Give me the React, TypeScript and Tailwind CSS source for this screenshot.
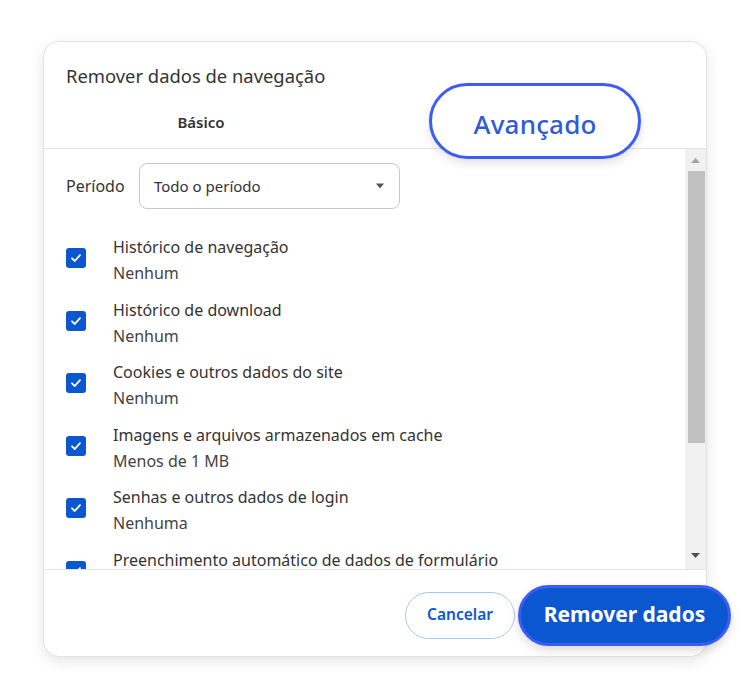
import React from "react";

const items: [string, string][] = [
  ["Histórico de navegação", "Nenhum"],
  ["Histórico de download", "Nenhum"],
  ["Cookies e outros dados do site", "Nenhum"],
  ["Imagens e arquivos armazenados em cache", "Menos de 1 MB"],
  ["Senhas e outros dados de login", "Nenhuma"],
  ["Preenchimento automático de dados de formulário", ""],
];

function Check() {
  return (
    <div className="w-[20px] h-[20px] rounded-[3px] bg-[#0b57d0] flex items-center justify-center shrink-0">
      <svg width="12" height="12" viewBox="0 0 12 12" fill="none">
        <path d="M2 6.3 L4.8 9 L10 3.2" stroke="white" strokeWidth="1.8" strokeLinecap="round" strokeLinejoin="round" />
      </svg>
    </div>
  );
}

export default function App() {
  return (
    <div className="w-[750px] h-[699px] bg-white pt-[41px] pl-[43px]" style={{ fontFamily: '"Noto Sans", "Open Sans", sans-serif' }}>
      <div className="relative w-[664px] h-[616px] rounded-[16px] border border-[#e2e2e2] bg-white shadow-[0_4px_14px_rgba(0,0,0,0.10)] flex flex-col">
        {/* header */}
        <div className="h-[107px] flex flex-col border-b border-[#e4e4e4] rounded-t-[16px]">
          <div className="pl-[22px] pt-[21px] text-[18.4px] leading-[26px] text-[#333]">Remover dados de navegação</div>
          <div className="flex flex-1">
            <div className="w-[314px] flex items-center justify-center text-[15px] font-semibold text-[#333] pt-[8px]">Básico</div>
            <div className="flex-1" />
          </div>
        </div>
        {/* Avançado pill overlay */}
        <div className="absolute left-[385px] top-[41px] w-[212px] h-[76px] rounded-full border-[3px] border-[#3d5cf5] bg-white shadow-[0_4px_10px_rgba(0,0,0,0.12)] flex items-center justify-center">
          <span className="text-[26px] font-medium text-[#2f5bd9] tracking-[0.2px] pt-[6px]">Avançado</span>
        </div>
        {/* scroll body */}
        <div className="flex h-[421px] border-b border-[#e4e4e4]">
          <div className="flex-1 overflow-hidden pl-[22px]">
            <div className="flex items-center h-[46px] mt-[14px]">
              <span className="text-[16px] text-[#333] w-[73px]">Período</span>
              <div className="w-[261px] h-[46px] rounded-[8px] border border-[#c8c8c8] flex items-center justify-between pl-[14px] pr-[14px]">
                <span className="text-[15px] text-[#333]">Todo o período</span>
                <svg width="10" height="6" viewBox="0 0 10 6"><path d="M1 0.5 L9 0.5 L5 5.5 Z" fill="#555" /></svg>
              </div>
            </div>
            <div className="mt-[25px] flex flex-col">
              {items.map(([a, b], i) => (
                <div key={i} className="h-[62.6px] shrink-0 flex items-start">
                  <div className="mt-[14px]"><Check /></div>
                  <div className="pl-[27px] flex flex-col">
                    <span className="text-[16px] leading-[26px] text-[#333] whitespace-nowrap">{a}</span>
                    <span className="text-[16px] leading-[26px] text-[#444]">{b}</span>
                  </div>
                </div>
              ))}
            </div>
          </div>
          {/* scrollbar */}
          <div className="w-[21px] bg-[#f1f1f1] flex flex-col items-center">
            <div className="h-[22px] flex items-center justify-center">
              <svg width="9" height="5" viewBox="0 0 9 5"><path d="M0 5 L4.5 0 L9 5 Z" fill="#a3a3a3" /></svg>
            </div>
            <div className="w-[17px] h-[272px] bg-[#c1c1c1] ml-[2px]" />
            <div className="flex-1" />
            <div className="h-[28px] flex items-center justify-center">
              <svg width="9" height="5" viewBox="0 0 9 5"><path d="M0 0 L9 0 L4.5 5 Z" fill="#505050" /></svg>
            </div>
          </div>
        </div>
        {/* footer */}
        <div className="flex-1 flex items-center justify-end pt-[4px]">
          <button className="w-[110px] h-[47px] rounded-full border border-[#a8c7fa] bg-white text-[15.5px] font-semibold text-[#0b57d0] mr-[3px]">Cancelar</button>
          <button className="w-[213px] h-[61px] rounded-full border-[3px] border-[#3d5cf5] bg-[#0b57d0] text-[21px] font-bold text-white -mr-[25px] shadow-[0_4px_10px_rgba(0,0,0,0.15)]">Remover dados</button>
        </div>
      </div>
    </div>
  );
}
